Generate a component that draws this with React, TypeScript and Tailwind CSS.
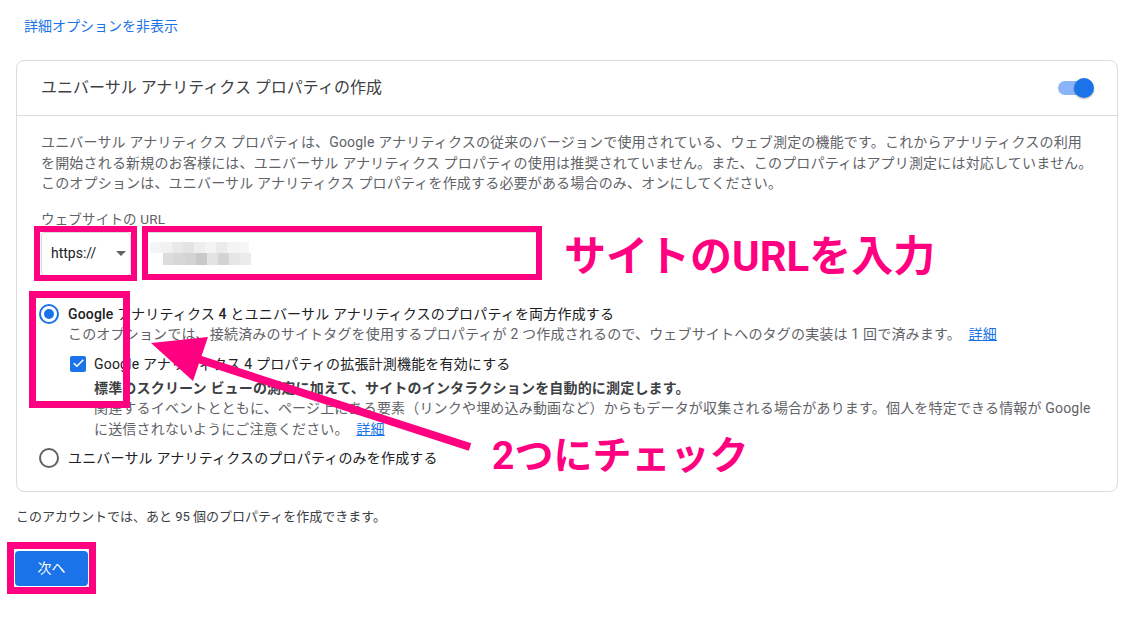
import { Check } from "lucide-react";

const topBlur = ["#f5f5f5", "#f2f2f2", "#e9e9e9", "#e4e4e4", "#eeeeee", "#f3f3f3", "#ebebeb", "#f4f4f4", "#f6f6f6"];
const bottomBlur = ["#dcdcdc", "#d7d7d7", "#d3d3d3", "#c9c9c9", "#e3e3e3", "#d4d4d4", "#e6e6e6", "#ebebeb"];

function Radio({ checked }: { checked: boolean }) {
    return (
        <div
            className={`w-[20px] h-[20px] rounded-full border-2 flex items-center justify-center shrink-0 ${
                checked ? "border-[#1a73e8]" : "border-[#5f6368]"
            }`}
        >
            {checked && <div className="w-[10px] h-[10px] rounded-full bg-[#1a73e8]" />}
        </div>
    );
}

export default function App() {
    return (
        <div className="relative w-[1143px] h-[633px] bg-white overflow-hidden font-['Roboto','Noto_Sans_CJK_JP',sans-serif]">
            <div className="pl-[16px] pt-[16px]">
                <a className="block pl-[8px] text-[14px] leading-[20px] text-[#1a73e8]">詳細オプションを非表示</a>

                {/* card */}
                <div className="mt-[24px] w-[1102px] rounded-[8px] border border-[#dadce0]">
                    <div className="h-[55px] flex items-center justify-between pl-[24px] pr-[23px] border-b border-[#dadce0]">
                        <span className="text-[16px] text-[#3c4043]">ユニバーサル アナリティクス プロパティの作成</span>
                        <div className="relative w-[36px] h-[20px]">
                            <div className="absolute left-0 top-[3px] w-[30px] h-[14px] rounded-full bg-[#8ab4f8]" />
                            <div className="absolute right-0 top-0 w-[20px] h-[20px] rounded-full bg-[#1a73e8] shadow-[0_1px_2px_rgba(0,0,0,0.3)]" />
                        </div>
                    </div>

                    <div className="px-[24px] pt-[16px] pb-[23px] tracking-[0.18px]">
                        <p className="text-[14px] leading-[20.5px] text-[#5f6368] whitespace-nowrap">
                            ユニバーサル アナリティクス プロパティは、Google アナリティクスの従来のバージョンで使用されている、ウェブ測定の機能です。これからアナリティクスの利用
                            <br />
                            を開始される新規のお客様には、ユニバーサル アナリティクス プロパティの使用は推奨されていません。また、このプロパティはアプリ測定には対応していません。
                            <br />
                            このオプションは、ユニバーサル アナリティクス プロパティを作成する必要がある場合のみ、オンにしてください。
                        </p>

                        <div className="mt-[17px] text-[13.5px] leading-[16px] text-[#5f6368]">ウェブサイトの URL</div>

                        <div className="mt-[5px] flex tracking-normal">
                            <div className="w-[90px] h-[44px] rounded-[4px] border border-[#dadce0] flex items-center justify-between pl-[9px] pr-[4px]">
                                <span className="text-[14px] text-[#202124]">https://</span>
                                <svg width="10" height="5" viewBox="0 0 10 5">
                                    <path d="M0 0 L10 0 L5 5 Z" fill="#5f6368" />
                                </svg>
                            </div>
                            <div className="ml-[13px] w-[396px] h-[44px] rounded-[4px] border border-[#dadce0] flex flex-col justify-center pl-[5px]">
                                <div className="flex">
                                    {topBlur.map((c, i) => (
                                        <div key={i} className="w-[11px] h-[11px]" style={{ backgroundColor: c }} />
                                    ))}
                                </div>
                                <div className="flex pl-[13px]">
                                    {bottomBlur.map((c, i) => (
                                        <div key={i} className="w-[11px] h-[12px]" style={{ backgroundColor: c }} />
                                    ))}
                                </div>
                            </div>
                        </div>

                        {/* option 1 */}
                        <div className="mt-[28px] flex items-start gap-[9px] -ml-[2px]">
                            <div className="h-[20px] flex items-center">
                                <Radio checked />
                            </div>
                            <div className="text-[14px] leading-[20px] whitespace-nowrap">
                                <div className="text-[#202124]">
                                    <span className="font-medium">Google</span> アナリティクス <span className="font-medium">4</span> とユニバーサル アナリティクスのプロパティを両方作成する
                                </div>
                                <div className="text-[#5f6368]">
                                    このオプションでは、接続済みのサイトタグを使用するプロパティが 2 つ作成されるので、ウェブサイトへのタグの実装は 1 回で済みます。{" "}
                                    <a className="ml-[4px] text-[#1a73e8] underline">詳細</a>
                                </div>

                                <div className="mt-[10px] ml-[2px] flex items-start gap-[8px]">
                                    <div className="h-[20px] flex items-center">
                                        <div className="w-[16px] h-[16px] rounded-[2px] bg-[#1a73e8] flex items-center justify-center">
                                            <Check className="w-[13px] h-[13px] text-white" strokeWidth={3} />
                                        </div>
                                    </div>
                                    <div>
                                        <div className="text-[#202124]">Google アナリティクス 4 プロパティの拡張計測機能を有効にする</div>
                                        <div className="mt-[4px] leading-[20.5px]">
                                            <div className="font-bold text-[#3c4043]">
                                                標準のスクリーン ビューの測定に加えて、サイトのインタラクションを自動的に測定します。
                                            </div>
                                            <div className="text-[#5f6368]">
                                                関連するイベントとともに、ページ上にある要素（リンクや埋め込み動画など）からもデータが収集される場合があります。個人を特定できる情報が Google
                                                <br />
                                                に送信されないようにご注意ください。{" "}
                                                <a className="ml-[4px] text-[#1a73e8] underline">詳細</a>
                                            </div>
                                        </div>
                                    </div>
                                </div>
                            </div>
                        </div>

                        {/* option 2 */}
                        <div className="mt-[9px] flex items-center gap-[9px] -ml-[2px] text-[14px] leading-[20px]">
                            <Radio checked={false} />
                            <span className="text-[#202124]">ユニバーサル アナリティクスのプロパティのみを作成する</span>
                        </div>
                    </div>
                </div>

                <div className="mt-[16px] text-[13px] leading-[18px] text-[#3c4043]">
                    このアカウントでは、あと 95 個のプロパティを作成できます。
                </div>

                <button className="mt-[25px] -ml-px w-[73px] h-[35px] rounded-[4px] bg-[#1a73e8] text-white text-[14px]">
                    次へ
                </button>
            </div>

            {/* annotations */}
            <div className="absolute left-[34px] top-[226px] w-[103px] h-[55px] border-[6px] border-[#ff0080]" />
            <div className="absolute left-[142px] top-[226px] w-[400px] h-[54px] border-[6px] border-[#ff0080]" />
            <div className="absolute left-[29px] top-[291px] w-[101px] h-[117px] border-[7px] border-[#ff0080]" />
            <div className="absolute left-[7px] top-[542px] w-[89px] h-[52px] border-[7px] border-[#ff0080]" />

            <svg className="absolute inset-0 pointer-events-none" width="1143" height="633" viewBox="0 0 1143 633">
                <line x1="470" y1="447" x2="195" y2="358" stroke="#ff0080" strokeWidth="8" />
                <polygon points="151,343 208,337 193,381" fill="#ff0080" />
            </svg>

            <div className="absolute left-[564px] top-[232px] text-[42px] leading-[50px] font-bold text-[#ff0080] whitespace-nowrap">
                サイトのURLを入力
            </div>
            <div className="absolute left-[492px] top-[432px] text-[39px] leading-[48px] font-bold text-[#ff0080] whitespace-nowrap">
                2つにチェック
            </div>
        </div>
    );
}
